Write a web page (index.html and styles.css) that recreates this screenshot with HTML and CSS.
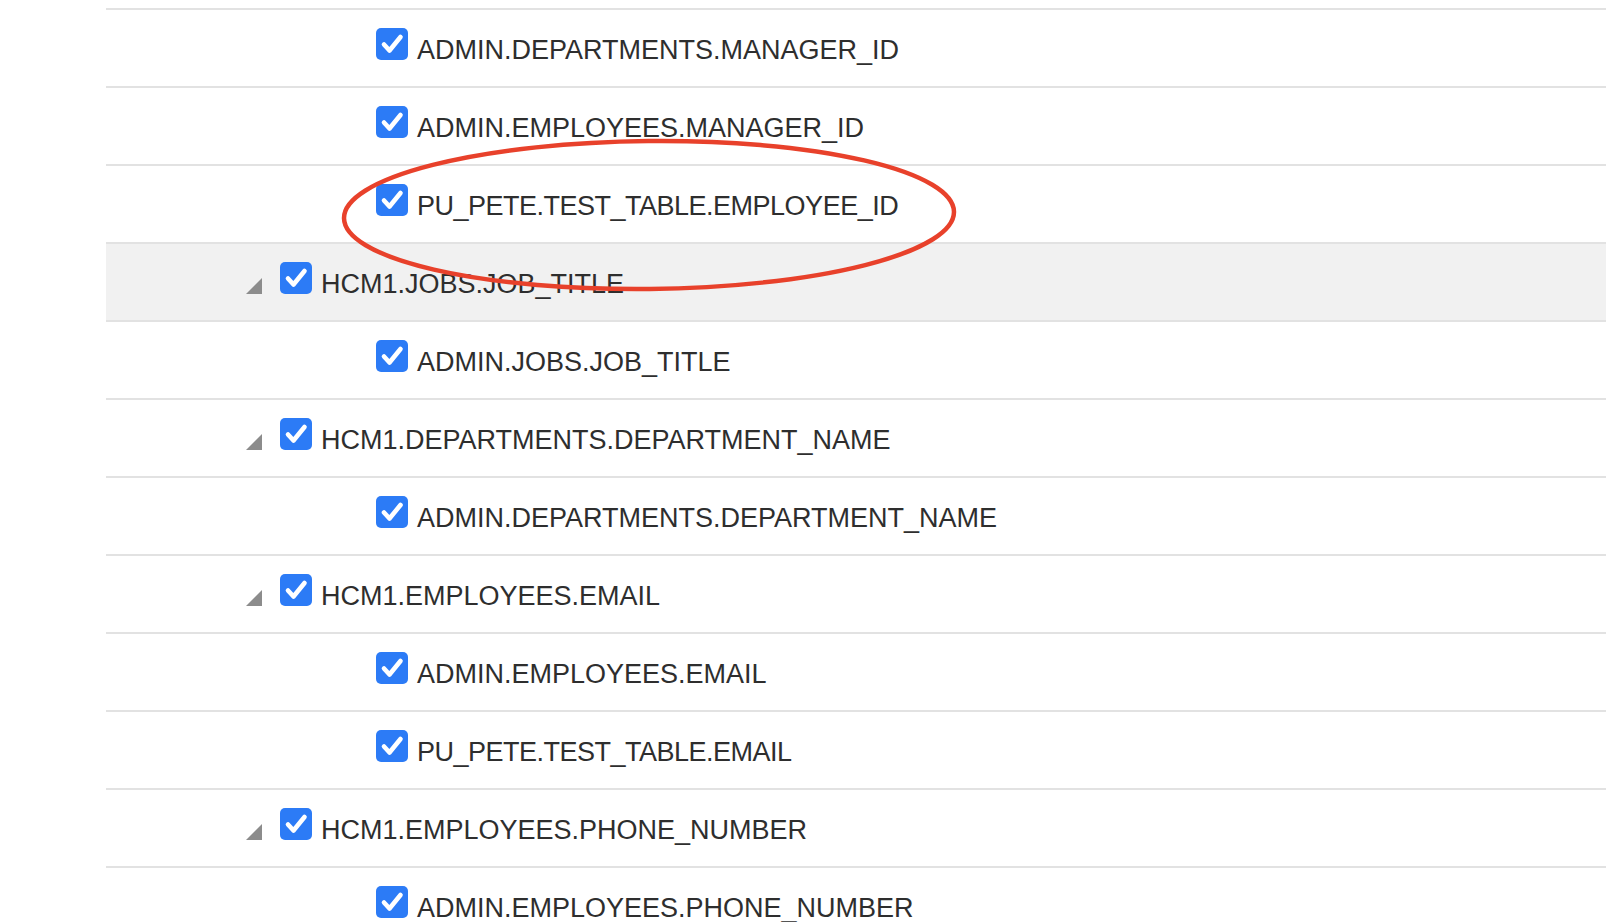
FILE: index.html
```html
<!DOCTYPE html>
<html lang="en">
<head>
<meta charset="utf-8">
<title>Column mapping</title>
<link rel="stylesheet" href="styles.css">
</head>
<body>
<div class="tree">
  <div class="row l2"><span class="cb"><svg viewBox="0 0 32 32" width="32" height="32"><rect width="32" height="32" rx="5" fill="#2c7bf6"/><path d="M8 16.5 L13.5 22.5 L24.5 9" fill="none" stroke="#fff" stroke-width="4.6" stroke-linecap="round" stroke-linejoin="round"/></svg></span><span class="label">ADMIN.DEPARTMENTS.MANAGER_ID</span></div>
  <div class="row l2"><span class="cb"><svg viewBox="0 0 32 32" width="32" height="32"><rect width="32" height="32" rx="5" fill="#2c7bf6"/><path d="M8 16.5 L13.5 22.5 L24.5 9" fill="none" stroke="#fff" stroke-width="4.6" stroke-linecap="round" stroke-linejoin="round"/></svg></span><span class="label">ADMIN.EMPLOYEES.MANAGER_ID</span></div>
  <div class="row l2"><span class="cb"><svg viewBox="0 0 32 32" width="32" height="32"><rect width="32" height="32" rx="5" fill="#2c7bf6"/><path d="M8 16.5 L13.5 22.5 L24.5 9" fill="none" stroke="#fff" stroke-width="4.6" stroke-linecap="round" stroke-linejoin="round"/></svg></span><span class="label tight">PU_PETE.TEST_TABLE.EMPLOYEE_ID</span></div>
  <div class="row l1 selected"><span class="tri"></span><span class="cb"><svg viewBox="0 0 32 32" width="32" height="32"><rect width="32" height="32" rx="5" fill="#2c7bf6"/><path d="M8 16.5 L13.5 22.5 L24.5 9" fill="none" stroke="#fff" stroke-width="4.6" stroke-linecap="round" stroke-linejoin="round"/></svg></span><span class="label">HCM1.JOBS.JOB_TITLE</span></div>
  <div class="row l2"><span class="cb"><svg viewBox="0 0 32 32" width="32" height="32"><rect width="32" height="32" rx="5" fill="#2c7bf6"/><path d="M8 16.5 L13.5 22.5 L24.5 9" fill="none" stroke="#fff" stroke-width="4.6" stroke-linecap="round" stroke-linejoin="round"/></svg></span><span class="label">ADMIN.JOBS.JOB_TITLE</span></div>
  <div class="row l1"><span class="tri"></span><span class="cb"><svg viewBox="0 0 32 32" width="32" height="32"><rect width="32" height="32" rx="5" fill="#2c7bf6"/><path d="M8 16.5 L13.5 22.5 L24.5 9" fill="none" stroke="#fff" stroke-width="4.6" stroke-linecap="round" stroke-linejoin="round"/></svg></span><span class="label">HCM1.DEPARTMENTS.DEPARTMENT_NAME</span></div>
  <div class="row l2"><span class="cb"><svg viewBox="0 0 32 32" width="32" height="32"><rect width="32" height="32" rx="5" fill="#2c7bf6"/><path d="M8 16.5 L13.5 22.5 L24.5 9" fill="none" stroke="#fff" stroke-width="4.6" stroke-linecap="round" stroke-linejoin="round"/></svg></span><span class="label">ADMIN.DEPARTMENTS.DEPARTMENT_NAME</span></div>
  <div class="row l1"><span class="tri"></span><span class="cb"><svg viewBox="0 0 32 32" width="32" height="32"><rect width="32" height="32" rx="5" fill="#2c7bf6"/><path d="M8 16.5 L13.5 22.5 L24.5 9" fill="none" stroke="#fff" stroke-width="4.6" stroke-linecap="round" stroke-linejoin="round"/></svg></span><span class="label">HCM1.EMPLOYEES.EMAIL</span></div>
  <div class="row l2"><span class="cb"><svg viewBox="0 0 32 32" width="32" height="32"><rect width="32" height="32" rx="5" fill="#2c7bf6"/><path d="M8 16.5 L13.5 22.5 L24.5 9" fill="none" stroke="#fff" stroke-width="4.6" stroke-linecap="round" stroke-linejoin="round"/></svg></span><span class="label">ADMIN.EMPLOYEES.EMAIL</span></div>
  <div class="row l2"><span class="cb"><svg viewBox="0 0 32 32" width="32" height="32"><rect width="32" height="32" rx="5" fill="#2c7bf6"/><path d="M8 16.5 L13.5 22.5 L24.5 9" fill="none" stroke="#fff" stroke-width="4.6" stroke-linecap="round" stroke-linejoin="round"/></svg></span><span class="label tight">PU_PETE.TEST_TABLE.EMAIL</span></div>
  <div class="row l1"><span class="tri"></span><span class="cb"><svg viewBox="0 0 32 32" width="32" height="32"><rect width="32" height="32" rx="5" fill="#2c7bf6"/><path d="M8 16.5 L13.5 22.5 L24.5 9" fill="none" stroke="#fff" stroke-width="4.6" stroke-linecap="round" stroke-linejoin="round"/></svg></span><span class="label">HCM1.EMPLOYEES.PHONE_NUMBER</span></div>
  <div class="row l2"><span class="cb"><svg viewBox="0 0 32 32" width="32" height="32"><rect width="32" height="32" rx="5" fill="#2c7bf6"/><path d="M8 16.5 L13.5 22.5 L24.5 9" fill="none" stroke="#fff" stroke-width="4.6" stroke-linecap="round" stroke-linejoin="round"/></svg></span><span class="label">ADMIN.EMPLOYEES.PHONE_NUMBER</span></div>
</div>
<svg class="annotation" width="640" height="170" viewBox="0 0 640 170"><ellipse cx="320" cy="85" rx="305" ry="74" fill="none" stroke="#e8412b" stroke-width="4.5" transform="rotate(-0.6 320 85)"/></svg>
</body>
</html>
```
FILE: styles.css
```css
html, body {
  margin: 0;
  padding: 0;
  background: #fff;
  width: 1606px;
  height: 922px;
  overflow: hidden;
  position: relative;
}
.tree {
  padding-top: 8px;
  margin-left: 106px;
  font-family: "Liberation Sans", Arial, sans-serif;
  font-size: 27px;
  color: #2e2e2e;
}
.row {
  border-top: 2px solid #e2e2e2;
  display: flex;
  align-items: baseline;
  padding-top: 18px;
  box-sizing: border-box;
  height: 78px;
}
.row.selected {
  background: #f1f1f1;
}
.row.l2 { padding-left: 270px; }
.row.l1 { padding-left: 140px; }
.tri {
  width: 16px;
  height: 16px;
  margin-right: 18px;
  background: #8c8c8c;
  clip-path: polygon(100% 0, 100% 100%, 0 100%);
  display: inline-block;
  margin-bottom: 2px;
}
.cb {
  display: inline-block;
  width: 32px;
  height: 32px;
  margin-right: 9px;
}
.cb svg { display: block; }
.label {
  line-height: 32px;
  white-space: nowrap;
  position: relative;
  top: -1px;
}
.label.tight {
  letter-spacing: -0.5px;
}
.annotation {
  position: absolute;
  left: 329px;
  top: 130px;
}
```
